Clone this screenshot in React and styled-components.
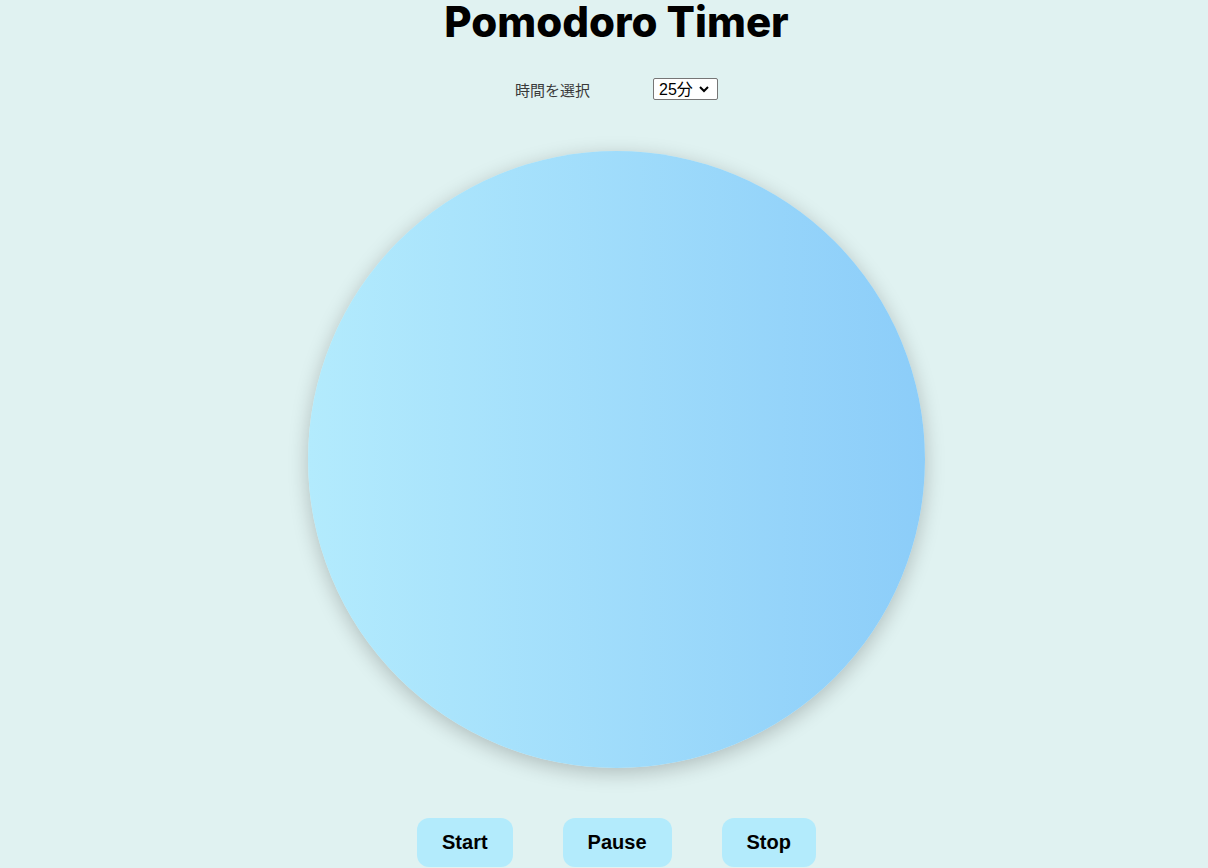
import React, {useState} from 'react'
import styled, {createGlobalStyle} from 'styled-components'

const GlobalStyle = createGlobalStyle`
   html, body {
      margin: 0;
      padding: 0;
      background-color: #e0f2f1;
      overflow: hidden;
   }
   body {
      font-family: 'Liberation Sans', Arial, sans-serif;
   }
`;

const Page = styled.div`
   display: flex;
   flex-direction: column;
   align-items: center;
   height: 868px;
   padding-left: 25px;
`;

const Title = styled.h1`
   margin: 0;
   font-family: 'Inter', 'Noto Sans', sans-serif;
   font-weight: 800;
   font-size: 42px;
   line-height: 44px;
   color: #000;
`;

const Picker = styled.div`
   display: flex;
   align-items: center;
   gap: 63px;
   margin-top: 34px;
   font-size: 15px;
`;

const Label = styled.label`
   color: #3a3a3a;
   font-family: 'Liberation Sans', 'Noto Sans CJK JP', sans-serif;
`;

const SelectWrap = styled.div`
   position: relative;
   display: flex;
`;

const Select = styled.select`
   appearance: none;
   font-family: 'Liberation Sans', 'Noto Sans CJK JP', sans-serif;
   font-size: 16px;
   width: 65px;
   height: 22px;
   padding: 0 20px 0 5px;
   background: #fff;
   border: 1px solid #767676;
   border-radius: 2px;
   color: #000;
`;

const Chevron = styled.svg`
   position: absolute;
   right: 9px;
   top: 8px;
   width: 10px;
   height: 7px;
   pointer-events: none;
`;

const Dial = styled.div`
   width: 617px;
   height: 617px;
   margin-top: 51px;
   border-radius: 50%;
   background: linear-gradient(to right, #b3ebfd, #8ccdf9);
   box-shadow: 0 5px 20px rgba(0, 0, 0, 0.22);
`;

const Controls = styled.div`
   display: flex;
   gap: 50px;
   margin-top: 50px;
`;

const Button = styled.button`
   font-family: 'Liberation Sans', Arial, sans-serif;
   font-weight: bold;
   font-size: 20px;
   padding: 13px 25px;
   border: 0;
   border-radius: 12px;
   background-color: #b3ebfc;
   color: #000;
   cursor: pointer;
`;

const App = () => {
   const [minutes, setMinutes] = useState('25');
   return(
      <Page>
         <GlobalStyle/>
         <Title>Pomodoro Timer</Title>
         <Picker>
            <Label htmlFor="minutes">時間を選択</Label>
            <SelectWrap>
               <Select id="minutes" value={minutes} onChange={e => setMinutes(e.target.value)}>
                  {['5', '10', '15', '25', '30', '45', '60'].map(m =>
                     <option key={m} value={m}>{m}分</option>
                  )}
               </Select>
               <Chevron viewBox="0 0 10 7">
                  <path d="M1 1 L5 5 L9 1" fill="none" stroke="#000" strokeWidth="2"/>
               </Chevron>
            </SelectWrap>
         </Picker>
         <Dial/>
         <Controls>
            <Button>Start</Button>
            <Button>Pause</Button>
            <Button>Stop</Button>
         </Controls>
      </Page>
   );
}

export default App;
